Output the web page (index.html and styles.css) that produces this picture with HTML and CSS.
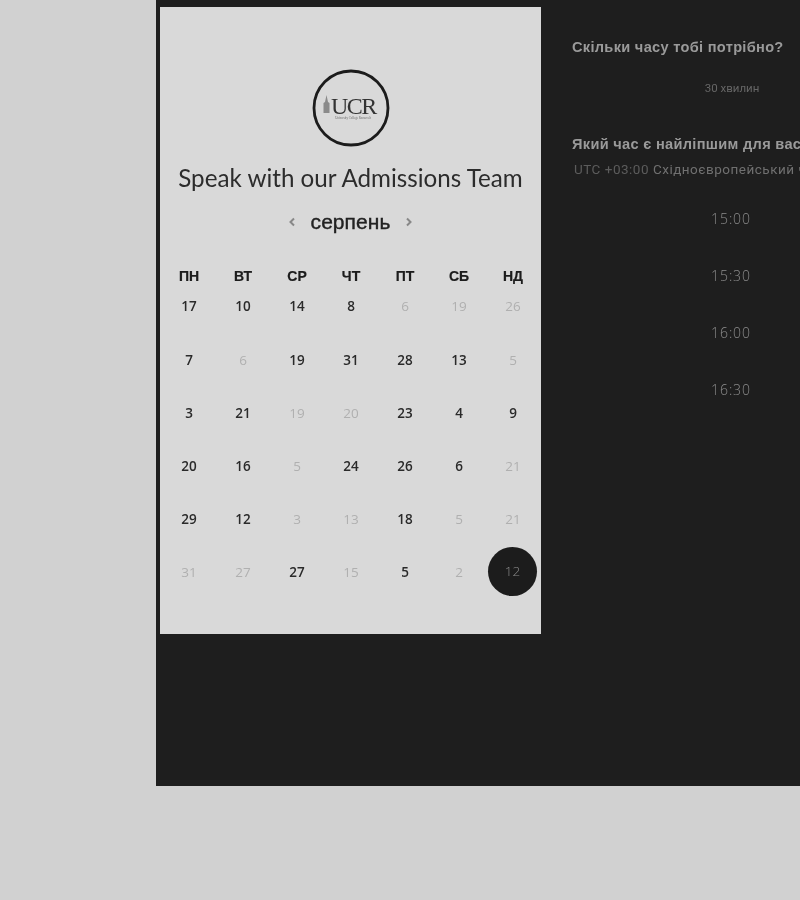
FILE: index.html
```html
<!DOCTYPE html>
<html lang="uk">
<head>
<meta charset="utf-8">
<title>Speak with our Admissions Team</title>
<link rel="stylesheet" href="styles.css">
</head>
<body>
<main class="shell">
  <section class="card">
    <svg class="logo" width="80" height="80" viewBox="0 0 80 80" aria-label="UCR">
      <circle cx="40" cy="40" r="37" fill="none" stroke="#1c1c1c" stroke-width="2.800"/>
      <path d="M12.500 45V35l1.500-1 1.500-7 1.500 7 1.500 1v10z" fill="#8a8a8a"/>
      <text x="20" y="46" class="logo-mark">UCR</text>
      <text x="42" y="50.500" class="logo-sub">University College Roosevelt</text>
    </svg>
    <h1 class="title">Speak with our Admissions Team</h1>
    <div class="month">
      <svg class="arrow" width="8" height="10" viewBox="0 0 8 10"><path d="M6 1.500 2.500 5 6 8.500" fill="none" stroke="#888" stroke-width="2"/></svg>
      <span class="month-name">серпень</span>
      <svg class="arrow" width="8" height="10" viewBox="0 0 8 10"><path d="M2 1.500 5.500 5 2 8.500" fill="none" stroke="#888" stroke-width="2"/></svg>
    </div>
    <div class="weekdays">
      <span>ПН</span><span>ВТ</span><span>СР</span><span>ЧТ</span><span>ПТ</span><span>СБ</span><span>НД</span>
    </div>
    <div class="days">
      <span>17</span><span>10</span><span>14</span><span>8</span><span class="off">6</span><span class="off">19</span><span class="off">26</span>
      <span>7</span><span class="off">6</span><span>19</span><span>31</span><span>28</span><span>13</span><span class="off">5</span>
      <span>3</span><span>21</span><span class="off">19</span><span class="off">20</span><span>23</span><span>4</span><span>9</span>
      <span>20</span><span>16</span><span class="off">5</span><span>24</span><span>26</span><span>6</span><span class="off">21</span>
      <span>29</span><span>12</span><span class="off">3</span><span class="off">13</span><span>18</span><span class="off">5</span><span class="off">21</span>
      <span class="off">31</span><span class="off">27</span><span>27</span><span class="off">15</span><span>5</span><span class="off">2</span><span class="selected"><b>12</b></span>
    </div>
  </section>
  <section class="panel">
    <h2 class="question">Скільки часу тобі потрібно?</h2>
    <div class="duration">30 хвилин</div>
    <h2 class="question best">Який час є найліпшим для вас?</h2>
    <div class="zone"><span class="utc">UTC +03:00</span> Східноєвропейський час</div>
    <ul class="slots">
      <li>15:00</li>
      <li>15:30</li>
      <li>16:00</li>
      <li>16:30</li>
    </ul>
  </section>
</main>
</body>
</html>
```
FILE: styles.css
```css
html, body {
  margin: 0;
  height: 900px;
  overflow: hidden;
  background: #d1d1d1;
}
.shell {
  display: flex;
  box-sizing: border-box;
  width: 650px;
  height: 786px;
  margin-left: 156px;
  padding: 7px 0 0 4px;
  background: #1e1e1e;
  overflow: hidden;
  font-family: "Liberation Sans", Arial, sans-serif;
  filter: blur(0.4px);
}
.card {
  flex: none;
  box-sizing: border-box;
  display: flex;
  flex-direction: column;
  align-items: center;
  width: 381px;
  height: 627px;
  padding-top: 61px;
  background: #d9d9d9;
  color: #1f1f1f;
}
.logo { display: block; flex: none; }
.logo-mark {
  font: 24px "Liberation Serif", serif;
  letter-spacing: -1.500px;
  fill: #333;
}
.logo-sub {
  font: 3px "Liberation Serif", serif;
  text-anchor: middle;
  fill: #666;
}
.title {
  margin: 15px 0 0;
  font: 400 24.200px/30px Lato, sans-serif;
  color: #2c2c2c;
  white-space: nowrap;
}
.month {
  display: flex;
  align-items: center;
  gap: 15px;
  margin-top: 14px;
  height: 30px;
}
.month-name {
  font-size: 21px;
  line-height: 30px;
  letter-spacing: 0.050px;
  color: #222;
  -webkit-text-stroke: 0.400px #222;
}
.weekdays, .days {
  display: grid;
  grid-template-columns: repeat(7, 54px);
  width: 378px;
  margin-left: 1px;
  text-align: center;
}
.weekdays {
  margin-top: 29px;
  font-size: 14px;
  font-weight: 700;
  line-height: 20px;
  color: #1c1c1c;
  -webkit-text-stroke: 0.200px #1c1c1c;
}
.days {
  margin-top: 0.400px;
  grid-auto-rows: 53.200px;
  font: 600 13.500px/20px "Open Sans", sans-serif;
  color: #2a2a2a;
}
.days span { display: block; padding-top: 10px; }
.days .off { color: #b0b0b0; font-weight: 400; }
.days .selected {
  display: flex;
  justify-content: center;
  padding: 0;
}
.selected b {
  box-sizing: border-box;
  flex: none;
  width: 49px;
  height: 49px;
  padding-top: 14px;
  margin: -5px 0 0 -1px;
  border-radius: 50%;
  background: #1c1c1c;
  color: #8a8a8a;
  font-weight: 300;
}
.panel {
  flex: none;
  width: 260px;
  padding-left: 31px;
  color: #9c9c9c;
}
.question {
  margin: 0;
  padding-top: 31px;
  font: 700 14.600px/18px "Liberation Sans", Arial, sans-serif;
  letter-spacing: 0.300px;
  color: #9a9a9a;
  white-space: nowrap;
}
.duration {
  width: 320px;
  margin-top: 24px;
  text-align: center;
  font: 400 11.500px/16px Roboto, sans-serif;
  color: #666;
}
.question.best { padding-top: 39px; }
.zone {
  margin-top: 7px;
  padding-left: 2px;
  font: 400 13.500px/18px Roboto, sans-serif;
  letter-spacing: 0.500px;
  color: #707070;
  white-space: nowrap;
}
.utc { color: #5c5c5c; }
.slots {
  list-style: none;
  width: 318px;
  margin: 0;
  padding: 31px 0 0;
  text-align: center;
  font: 300 14px/20px "Open Sans", sans-serif;
  letter-spacing: 0.900px;
  color: #8c8c8c;
}
.slots li { height: 57px; }
```
